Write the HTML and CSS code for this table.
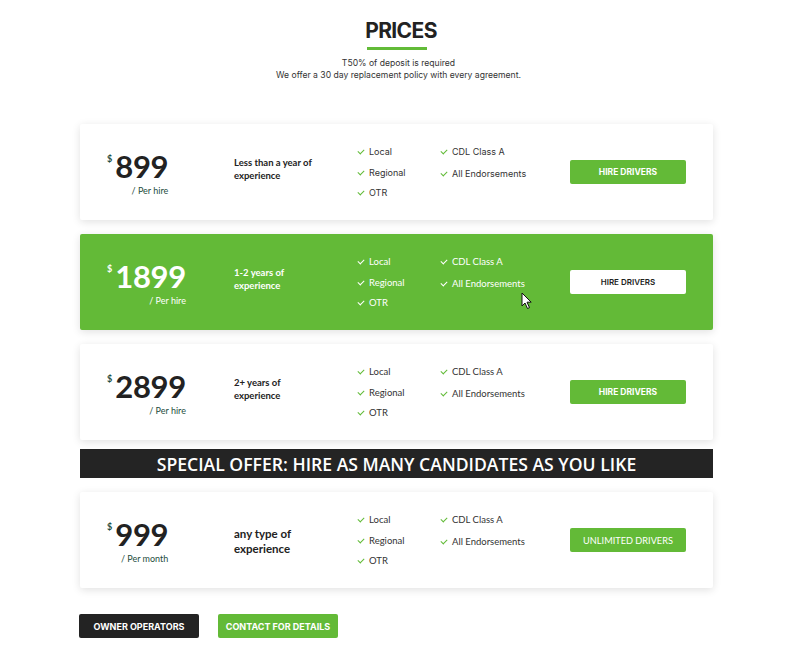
FILE: index.html
```html
<!DOCTYPE html>
<html lang="en">
<head>
<meta charset="utf-8">
<title>Prices</title>
<link rel="stylesheet" href="styles.css">
</head>
<body>
<main class="page">
  <header class="head">
    <h1 class="title">PRICES</h1>
    <div class="title-bar"></div>
    <p class="sub">T50% of deposit is required<br>We offer a 30 day replacement policy with every agreement.</p>
  </header>

  <section class="plans">
    <div class="card card-first">
      <div class="price"><div class="amount"><span class="cur">$</span><span class="num">899</span></div><div class="per">/ Per hire</div></div>
      <div class="desc">Less than a year of experience</div>
      <ul class="feat">
        <li><span class="ck"></span>Local</li>
        <li><span class="ck"></span>Regional</li>
        <li><span class="ck"></span>OTR</li>
      </ul>
      <ul class="feat feat-b">
        <li><span class="ck"></span>CDL Class A</li>
        <li><span class="ck"></span>All Endorsements</li>
      </ul>
      <a class="btn btn-green" href="#">HIRE DRIVERS</a>
    </div>

    <div class="card card-green">
      <div class="price"><div class="amount"><span class="cur">$</span><span class="num">1899</span></div><div class="per">/ Per hire</div></div>
      <div class="desc">1-2 years of experience</div>
      <ul class="feat">
        <li><span class="ck"></span>Local</li>
        <li><span class="ck"></span>Regional</li>
        <li><span class="ck"></span>OTR</li>
      </ul>
      <ul class="feat feat-b">
        <li><span class="ck"></span>CDL Class A</li>
        <li><span class="ck"></span>All Endorsements</li>
      </ul>
      <a class="btn btn-white" href="#">HIRE DRIVERS</a>
      <svg class="cursor" width="12" height="18" viewBox="0 0 12 18"><path d="M1 1 L1 14 L4 11 L6.5 16.5 L8.5 15.6 L6 10.2 L10.2 10.2 Z" fill="#fff" stroke="#111" stroke-width="1" stroke-linejoin="round"/></svg>
    </div>

    <div class="card">
      <div class="price"><div class="amount"><span class="cur">$</span><span class="num">2899</span></div><div class="per">/ Per hire</div></div>
      <div class="desc">2+ years of experience</div>
      <ul class="feat">
        <li><span class="ck"></span>Local</li>
        <li><span class="ck"></span>Regional</li>
        <li><span class="ck"></span>OTR</li>
      </ul>
      <ul class="feat feat-b">
        <li><span class="ck"></span>CDL Class A</li>
        <li><span class="ck"></span>All Endorsements</li>
      </ul>
      <a class="btn btn-green" href="#">HIRE DRIVERS</a>
    </div>

    <div class="offer">SPECIAL OFFER: HIRE AS MANY CANDIDATES AS YOU LIKE</div>

    <div class="card">
      <div class="price"><div class="amount"><span class="cur">$</span><span class="num">999</span></div><div class="per">/ Per month</div></div>
      <div class="desc desc-big">any type of experience</div>
      <ul class="feat">
        <li><span class="ck"></span>Local</li>
        <li><span class="ck"></span>Regional</li>
        <li><span class="ck"></span>OTR</li>
      </ul>
      <ul class="feat feat-b">
        <li><span class="ck"></span>CDL Class A</li>
        <li><span class="ck"></span>All Endorsements</li>
      </ul>
      <a class="btn btn-green btn-thin" href="#">UNLIMITED DRIVERS</a>
    </div>
  </section>

  <div class="actions">
    <a class="btn btn-dark" href="#">OWNER OPERATORS</a>
    <a class="btn btn-green" href="#">CONTACT FOR DETAILS</a>
  </div>
</main>
</body>
</html>
```
FILE: styles.css
```css
* { box-sizing: border-box; }
html, body { margin: 0; padding: 0; background: #fff; }
body { font-family: "Lato", "Inter", sans-serif; color: #222; }

.page { width: 633px; margin: 0 auto; padding-top: 18px; }

.head { text-align: center; }
.title {
  margin: 0;
  padding-left: 9px;
  font-family: "Inter", "Roboto", sans-serif;
  font-weight: 700;
  font-size: 21px;
  letter-spacing: -0.6px;
  line-height: 26px;
  color: #222;
}
.title-bar { width: 60px; height: 3px; background: #62bb38; margin: 3px auto 0; }
.sub {
  margin: 7px 0 0;
  padding-left: 4px;
  font-family: "Inter", sans-serif;
  font-size: 8.6px;
  line-height: 12px;
  color: #333;
}

.plans { margin-top: 43px; display: flex; flex-direction: column; gap: 14px; }

.card {
  position: relative;
  height: 96px;
  background: #fff;
  box-shadow: 0 2px 8px rgba(0, 0, 0, 0.12);
  border-radius: 2px;
  display: grid;
  grid-template-columns: 127px 124px 83px 129px 116px;
  align-items: center;
  padding: 0 27px;
}
.card-green { background: #63ba37; color: #fff; }

.price { display: flex; flex-direction: column; align-items: flex-end; justify-self: start; margin-top: 3px; }
.amount { display: flex; align-items: flex-start; }
.cur { font-size: 9px; font-weight: 700; color: #1e4d3d; margin-top: 1px; margin-right: 3px; line-height: 11px; }
.num { font-size: 31px; font-weight: 700; line-height: 29px; letter-spacing: -0.3px; }
.per { font-size: 9px; color: #1e4d3d; margin-top: 4px; line-height: 11px; }
.card-green .cur, .card-green .per { color: #fff; }

.desc { font-size: 9.5px; font-weight: 700; line-height: 13px; width: 92px; margin-bottom: 6px; }
.desc-big { font-size: 11.5px; line-height: 15px; margin-bottom: 0; margin-top: 2px; }

.feat {
  list-style: none; margin: 2px 0 0; padding: 0;
  height: 54px;
  display: flex; flex-direction: column; gap: 8px;
}
.feat-b { gap: 9px; }
.feat li { font-size: 9.5px; line-height: 12.5px; display: flex; align-items: center; color: #333; white-space: nowrap; }
.card-green .feat li { color: #fff; }
.card-first .feat li { font-family: "Inter", sans-serif; font-size: 9px; }
.ck {
  width: 4px; height: 6px;
  border-right: 1px solid #62bb38;
  border-bottom: 1px solid #62bb38;
  transform: rotate(45deg);
  margin: -2px 6px 0 1px;
}
.card-green .ck { border-color: #fff; }

.btn {
  display: flex; align-items: center; justify-content: center;
  height: 24px;
  font-family: "Inter", sans-serif;
  font-size: 8.5px; font-weight: 700;
  text-decoration: none; border-radius: 2px;
  white-space: nowrap;
}
.btn-green { background: #63ba37; color: #fff; }
.btn-white { background: #fff; color: #222; font-weight: 600; font-size: 8px; }
.btn-dark { background: #232323; color: #fff; }
.btn-thin { font-family: "Lato", sans-serif; font-weight: 400; font-size: 9.2px; }

.offer {
  height: 29px;
  margin: -5px 0 0;
  background: #242424; color: #fff;
  display: flex; align-items: center; justify-content: center;
  font-family: "Open Sans", "Lato", sans-serif;
  font-size: 17.6px; font-weight: 600; letter-spacing: 0;
}

.actions { display: flex; gap: 19px; margin-top: 26px; margin-left: -1px; }
.actions .btn { width: 120px; font-size: 9px; }

.cursor { position: absolute; left: 441px; top: 58px; }
```
